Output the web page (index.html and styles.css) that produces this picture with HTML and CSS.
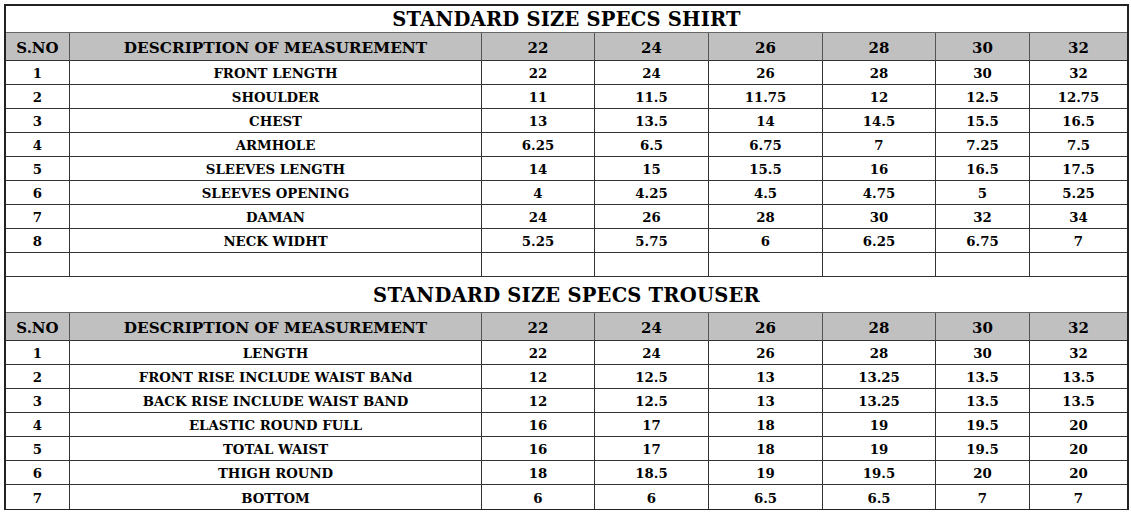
FILE: index.html
```html
<!DOCTYPE html>
<html>
<head>
<meta charset="utf-8">
<link rel="stylesheet" href="styles.css">
</head>
<body>
<div class="sheet">
  <div class="title">STANDARD SIZE SPECS SHIRT</div>
  <div class="row head"><div>S.NO</div><div>DESCRIPTION OF MEASUREMENT</div><div>22</div><div>24</div><div>26</div><div>28</div><div>30</div><div>32</div></div>
  <div class="row"><div>1</div><div>FRONT LENGTH</div><div>22</div><div>24</div><div>26</div><div>28</div><div>30</div><div>32</div></div>
  <div class="row"><div>2</div><div>SHOULDER</div><div>11</div><div>11.5</div><div>11.75</div><div>12</div><div>12.5</div><div>12.75</div></div>
  <div class="row"><div>3</div><div>CHEST</div><div>13</div><div>13.5</div><div>14</div><div>14.5</div><div>15.5</div><div>16.5</div></div>
  <div class="row"><div>4</div><div>ARMHOLE</div><div>6.25</div><div>6.5</div><div>6.75</div><div>7</div><div>7.25</div><div>7.5</div></div>
  <div class="row"><div>5</div><div>SLEEVES LENGTH</div><div>14</div><div>15</div><div>15.5</div><div>16</div><div>16.5</div><div>17.5</div></div>
  <div class="row"><div>6</div><div>SLEEVES OPENING</div><div>4</div><div>4.25</div><div>4.5</div><div>4.75</div><div>5</div><div>5.25</div></div>
  <div class="row"><div>7</div><div>DAMAN</div><div>24</div><div>26</div><div>28</div><div>30</div><div>32</div><div>34</div></div>
  <div class="row"><div>8</div><div>NECK WIDHT</div><div>5.25</div><div>5.75</div><div>6</div><div>6.25</div><div>6.75</div><div>7</div></div>
  <div class="row"><div></div><div></div><div></div><div></div><div></div><div></div><div></div><div></div></div>
  <div class="title title2">STANDARD SIZE SPECS TROUSER</div>
  <div class="row head"><div>S.NO</div><div>DESCRIPTION OF MEASUREMENT</div><div>22</div><div>24</div><div>26</div><div>28</div><div>30</div><div>32</div></div>
  <div class="row"><div>1</div><div>LENGTH</div><div>22</div><div>24</div><div>26</div><div>28</div><div>30</div><div>32</div></div>
  <div class="row"><div>2</div><div>FRONT RISE INCLUDE WAIST BANd</div><div>12</div><div>12.5</div><div>13</div><div>13.25</div><div>13.5</div><div>13.5</div></div>
  <div class="row"><div>3</div><div>BACK RISE INCLUDE WAIST BAND</div><div>12</div><div>12.5</div><div>13</div><div>13.25</div><div>13.5</div><div>13.5</div></div>
  <div class="row"><div>4</div><div>ELASTIC ROUND FULL</div><div>16</div><div>17</div><div>18</div><div>19</div><div>19.5</div><div>20</div></div>
  <div class="row"><div>5</div><div>TOTAL WAIST</div><div>16</div><div>17</div><div>18</div><div>19</div><div>19.5</div><div>20</div></div>
  <div class="row"><div>6</div><div>THIGH ROUND</div><div>18</div><div>18.5</div><div>19</div><div>19.5</div><div>20</div><div>20</div></div>
  <div class="row last"><div>7</div><div>BOTTOM</div><div>6</div><div>6</div><div>6.5</div><div>6.5</div><div>7</div><div>7</div></div>
</div>
</body>
</html>
```

FILE: styles.css
```css
html, body {
  margin: 0;
  padding: 0;
  background: #ffffff;
}
body {
  padding: 4px 0 0 4px;
  font-family: "DejaVu Serif", "Liberation Serif", serif;
  font-weight: bold;
  color: #000;
}
.sheet {
  width: 1125px;
  box-sizing: border-box;
  border: 2px solid #222;
  border-bottom-width: 1px;
}
.title {
  height: 25px;
  border-bottom: 1px solid #666;
  display: flex;
  align-items: center;
  justify-content: center;
  font-size: 19.5px;
  letter-spacing: 0.2px;
  padding-top: 1px;
  box-sizing: content-box;
}
.title2 {
  height: 33px;
  padding-top: 2px;
}
.row {
  display: grid;
  grid-template-columns: 64px 412px 113px 114px 114px 113px 94px 97px;
  height: 24px;
}
.row > div {
  border-right: 1px solid #333;
  border-bottom: 1px solid #333;
  display: flex;
  align-items: center;
  justify-content: center;
  font-size: 13.3px;
  padding-top: 2px;
}
.row > div:last-child {
  border-right: none;
}
.row.last > div {
  border-bottom: none;
}
.row.head {
  height: 28px;
  background: #c0c0c0;
}
.row.head > div {
  font-size: 15px;
  border-right-color: #555;
}
.row.head > div:nth-child(2) {
  font-size: 15.3px;
}
```
